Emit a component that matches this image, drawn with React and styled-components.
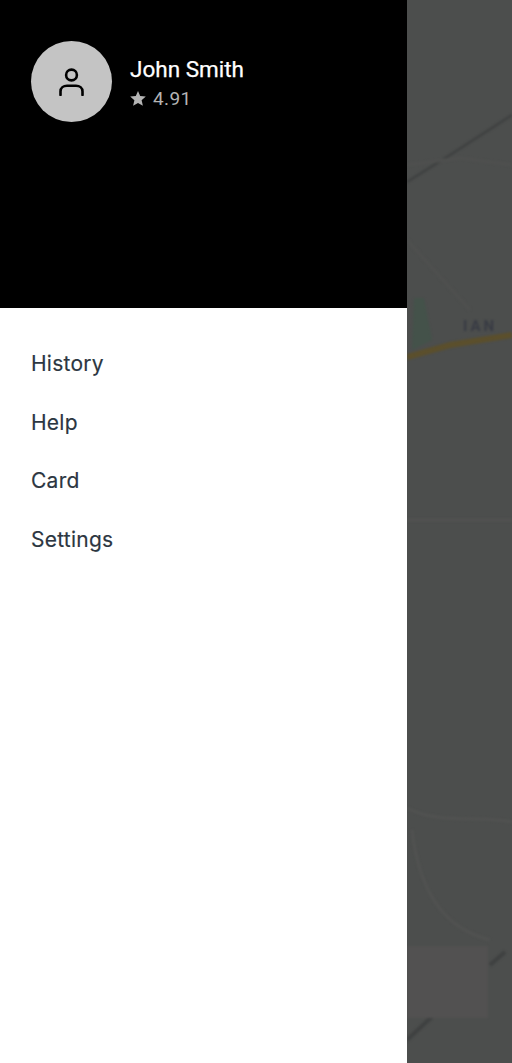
import React from "react";
import styled, { createGlobalStyle } from "styled-components";

const Global = createGlobalStyle`
  html, body { margin: 0; padding: 0; background: #4c4e4d; }
  #root { width: 512px; height: 1063px; overflow: hidden; }
`;

const Screen = styled.div`
  display: flex;
  width: 512px;
  height: 1063px;
  overflow: hidden;
`;

const Drawer = styled.nav`
  display: flex;
  flex-direction: column;
  flex: 0 0 407px;
  background: #fff;
`;

const Header = styled.header`
  display: flex;
  align-items: flex-start;
  gap: 18px;
  height: 308px;
  box-sizing: border-box;
  padding: 41px 31px 0;
  background: #000;
`;

const Avatar = styled.div`
  display: flex;
  align-items: center;
  justify-content: center;
  width: 81px;
  height: 81px;
  border-radius: 50%;
  background: #c4c4c4;
`;

const Profile = styled.div`
  display: flex;
  flex-direction: column;
  padding-top: 15px;
  font-family: Roboto, sans-serif;
`;

const Name = styled.div`
  color: #fff;
  font-size: 22.5px;
  font-weight: 400;
  line-height: 27px;
  -webkit-text-stroke: 0.25px #fff;
`;

const Rating = styled.div`
  display: flex;
  align-items: center;
  gap: 7px;
  color: #b4b4b4;
  font-size: 19px;
  line-height: 31px;
  letter-spacing: 0.4px;
`;

const Menu = styled.ul`
  display: flex;
  flex-direction: column;
  gap: 26px;
  list-style: none;
  margin: 0;
  padding: 40px 31px 0;
`;

const Item = styled.li`
  color: #2c3641;
  font-family: Inter, sans-serif;
  font-size: 21px;
  line-height: 32.7px;
  letter-spacing: 0.25px;
  -webkit-text-stroke: 0.15px #2c3641;
`;

const MapPane = styled.div`
  flex: 1;
  height: 100%;
  overflow: hidden;
  background: #4c4e4d;
`;

const MapArt = styled.svg`
  display: block;
  filter: blur(1.3px);
`;

const UserIcon = () => (
  <svg width="28" height="28" viewBox="0 0 28 28" fill="none" stroke="#000" strokeWidth="2.6" strokeLinecap="round">
    <circle cx="13.5" cy="7" r="5.4" />
    <path d="M2.5 27v-3.5C2.5 20 5.5 17.8 9 17.8h9c3.5 0 6.5 2.2 6.5 5.7V27" />
  </svg>
);

const StarIcon = () => (
  <svg width="16" height="15" viewBox="0 0 16 15" fill="#b4b4b4">
    <path d="M8 0l2.2 5.1 5.6.5-4.2 3.7 1.3 5.5L8 11.9l-4.9 2.9 1.3-5.5L.2 5.6l5.6-.5z" />
  </svg>
);

const items = ["History", "Help", "Card", "Settings"];

export default function App() {
  return (
    <Screen>
      <Global />
      <Drawer>
        <Header>
          <Avatar>
            <UserIcon />
          </Avatar>
          <Profile>
            <Name>John Smith</Name>
            <Rating>
              <StarIcon />
              4.91
            </Rating>
          </Profile>
        </Header>
        <Menu>
          {items.map((item) => (
            <Item key={item}>{item}</Item>
          ))}
        </Menu>
      </Drawer>
      <MapPane>
        <MapArt width="105" height="1063" viewBox="407 0 105 1063" fill="none">
          <path d="M407 182L450 155L512 115" stroke="#3f4141" strokeWidth="2.5" />
          <path d="M407 165L460 158L512 165M407 240L470 310" stroke="#4f504f" strokeWidth="3" />
          <path d="M407 520H512M407 808C440 825 480 815 512 822M412 830C420 900 450 930 490 940" stroke="#515251" strokeWidth="3" />
          <path d="M414 298H424L432 340L412 350Z" fill="#44524a" />
          <path d="M407 357L450 345L512 335" stroke="#5b4f2c" strokeWidth="6" />
          <path d="M407 1040L437 1012M490 965L505 952" stroke="#3f4141" strokeWidth="4" />
          <rect x="407" y="946" width="81" height="72" fill="#525151" />
          <text x="463" y="331" fill="#383b44" fontFamily="Roboto, sans-serif" fontSize="15" fontWeight="700" letterSpacing="3">IAN</text>
        </MapArt>
      </MapPane>
    </Screen>
  );
}
